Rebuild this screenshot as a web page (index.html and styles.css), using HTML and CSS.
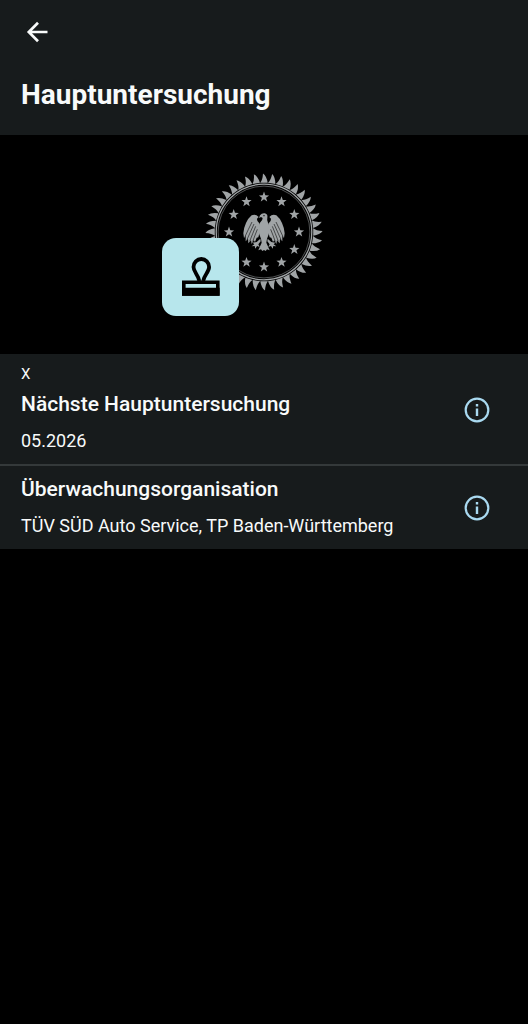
FILE: index.html
```html
<!DOCTYPE html>
<html lang="de">
<head>
<meta charset="utf-8">
<meta name="viewport" content="width=device-width, initial-scale=1">
<title>Hauptuntersuchung</title>
<link rel="stylesheet" href="styles.css">
</head>
<body>
<header class="top">
  <button class="icon-button back" type="button" aria-label="Zurück">
    <svg width="22" height="22" viewBox="0 0 22 22" fill="none" stroke="currentColor" stroke-width="2.7"><path d="M21.5 11H3M12 1.8L2.8 11l9.2 9.2"/></svg>
  </button>
  <h1 class="title">Hauptuntersuchung</h1>
</header>
<main>
  <div class="hero">
    <svg class="seal" width="204" height="143" viewBox="0 0 204 143" aria-hidden="true">
      <defs>
        <path id="tooth" d="M-3.8-49.2Q-1.4-52-1-58.6Q2.6-56 3.7-49.2Z"/>
        <g id="teeth">
          <use href="#tooth"/><use href="#tooth" transform="rotate(9)"/><use href="#tooth" transform="rotate(18)"/><use href="#tooth" transform="rotate(27)"/><use href="#tooth" transform="rotate(36)"/>
        </g>
        <path id="star" d="M0-5.4L1.3-1.7L5.1-1.6L2.1.8L3.2 4.5L0 2.3L-3.2 4.5L-2.1.8L-5.1-1.6L-1.3-1.7Z"/>
      </defs>
      <g transform="translate(102 59)" fill="#a0a4a6">
        <use href="#teeth"/><use href="#teeth" transform="rotate(45)"/><use href="#teeth" transform="rotate(90)"/><use href="#teeth" transform="rotate(135)"/><use href="#teeth" transform="rotate(180)"/><use href="#teeth" transform="rotate(225)"/><use href="#teeth" transform="rotate(270)"/><use href="#teeth" transform="rotate(315)"/>
        <circle r="47.8" fill="none" stroke="#a0a4a6" stroke-width="1.3"/>
        <circle r="45.9" fill="none" stroke="#a0a4a6" stroke-width=".5"/>
        <use href="#star" x="0" y="-35"/><use href="#star" x="17.5" y="-30.3"/><use href="#star" x="30.3" y="-17.5"/><use href="#star" x="35" y="0"/><use href="#star" x="30.3" y="17.5"/><use href="#star" x="17.5" y="30.3"/><use href="#star" x="0" y="35"/><use href="#star" x="-17.5" y="30.3"/><use href="#star" x="-30.3" y="17.5"/><use href="#star" x="-35" y="0"/><use href="#star" x="-30.3" y="-17.5"/><use href="#star" x="-17.5" y="-30.3"/>
        <g transform="scale(.3333)">
          <path d="M-12-50Q-6-58 3-56Q12-53 10-43Q8-37 12-28Q18-20 17-10Q16 6 9 20L7 32L17 55L9 52L5 57L0 54L-5 57L-9 52L-17 55L-7 32L-9 20Q-16 6-17-10Q-18-20-12-28Q-4-34-4-42L-9-45L-15-42Z"/>
          <g id="wing">
            <path d="M14-26Q22-32 21-40L16-45Q25-55 37-50Q47-42 54-27Q61-12 62 4L60 18L55 11L55 28L48 20L47 34L39 25L37 36L31 25L27 30L22 17L17 16L15 8L14 0Z"/>
            <path d="M36-30Q47-8 57 14M30-24Q41 0 51 23M25-17Q34 5 43 28M20-8Q27 9 34 29" fill="none" stroke="#000" stroke-width="1.7"/>
            <path d="M11 20L22 30L34 32L29 37L37 43L28 42L26 50L21 42L13 45L17 37L10 28Z"/>
          </g>
          <use href="#wing" transform="scale(-1 1)"/>
          <circle cx="0" cy="-49" r="2" fill="#000"/>
        </g>
      </g>
      <rect y="65" width="77" height="78" rx="14" fill="#b7e6ec"/>
      <g fill="none" stroke="#000">
        <path d="M37.3 108C36.5 102 31.5 99 31.5 94A7.8 8 0 0 1 47.1 94C47.1 99 42 102 41.2 108" stroke-width="3.8"/>
        <path d="M21.8 109.2H55.8V121H21.8Z" stroke-width="3.6"/>
        <path d="M20 118.7H57.6" stroke-width="8"/>
      </g>
    </svg>
  </div>
  <section class="row">
    <div class="text">
      <p class="mark">X</p>
      <h2 class="label">Nächste Hauptuntersuchung</h2>
      <p class="value">05.2026</p>
    </div>
    <button class="icon-button info" type="button" aria-label="Info zur nächsten Hauptuntersuchung">
      <svg width="26" height="26" viewBox="0 0 26 26" fill="none" stroke="currentColor"><circle cx="13" cy="13" r="11.3" stroke-width="2.2"/><path d="M13 11.5v7.5M13 7v2.6" stroke-width="2.4"/></svg>
    </button>
  </section>
  <section class="row">
    <div class="text">
      <h2 class="label">Überwachungsorganisation</h2>
      <p class="value">TÜV SÜD Auto Service, TP Baden-Württemberg</p>
    </div>
    <button class="icon-button info" type="button" aria-label="Info zur Überwachungsorganisation">
      <svg width="26" height="26" viewBox="0 0 26 26" fill="none" stroke="currentColor"><circle cx="13" cy="13" r="11.3" stroke-width="2.2"/><path d="M13 11.5v7.5M13 7v2.6" stroke-width="2.4"/></svg>
    </button>
  </section>
</main>
</body>
</html>
```
FILE: styles.css
```css
* { box-sizing: border-box; }
body {
  margin: 0;
  background: #000;
  color: #f8fafa;
  font-family: Roboto, "Liberation Sans", sans-serif;
}
h1, h2, p { margin: 0; }
.icon-button {
  display: flex;
  padding: 0;
  border: 0;
  background: none;
  color: inherit;
  cursor: pointer;
}
.top {
  background: #171b1c;
  padding: 21px 21px 23px;
}
.back { padding: 0 5px; }
.title {
  margin-top: 35px;
  font-size: 28px;
  line-height: 34px;
  font-weight: 700;
}
.hero {
  display: flex;
  justify-content: center;
  padding: 38px 0;
}
.row {
  display: flex;
  align-items: center;
  justify-content: space-between;
  gap: 16px;
  padding: 9px 38px 12px 21px;
  background: #171b1c;
}
.row + .row { border-top: 2px solid #34393a; }
.mark {
  margin-bottom: 5px;
  font-size: 15px;
  line-height: 22px;
}
.label {
  font-size: 21px;
  line-height: 28px;
  font-weight: 500;
}
.value {
  margin-top: 12px;
  font-size: 18px;
  line-height: 22px;
}
.info {
  margin-top: 4px;
  color: #a9d9f0;
}
```
